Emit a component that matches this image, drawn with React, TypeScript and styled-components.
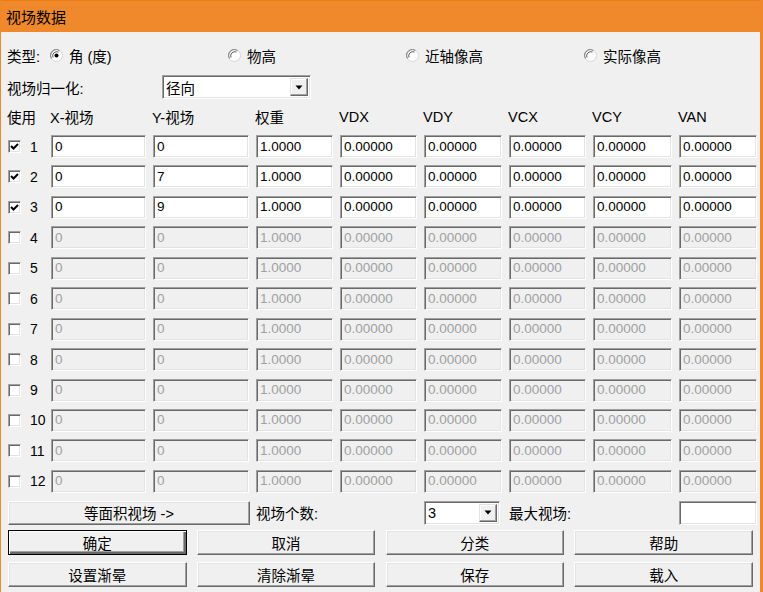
import React from "react";
import styled, { createGlobalStyle } from "styled-components";

const GlobalStyle = createGlobalStyle`
  html, body {
    margin: 0;
    padding: 0;
    background: #f0f0f0;
  }
  body {
    font-family: "Liberation Sans", "Noto Sans CJK SC", sans-serif;
    font-size: 14.5px;
    color: #000;
  }
`;

const Window = styled.div`
  width: 763px;
  height: 592px;
  box-sizing: border-box;
  border-left: 1px solid #f0882b;
  border-right: 3px solid #f0882b;
  background: #f0f0f0;
  overflow: hidden;
`;

const TitleBar = styled.div`
  height: 32px;
  margin-left: -1px;
  margin-right: -3px;
  box-sizing: border-box;
  border-top: 1px solid #ee7a12;
  background: #f0892b;
  display: flex;
  align-items: center;
  padding-left: 6px;
  font-size: 15px;
`;

const Body = styled.div`
  padding: 12px 0 0 6px;
  display: flex;
  flex-direction: column;
`;

const TypeRow = styled.div`
  height: 22px;
  display: flex;
  align-items: center;
`;

const TypeLabel = styled.span`
  width: 43px;
  flex-shrink: 0;
`;

const RadioItem = styled.label`
  width: 178px;
  flex-shrink: 0;
  display: flex;
  align-items: center;
  gap: 6px;
`;

const RadioIcon = styled.svg`
  flex-shrink: 0;
  width: 13px;
  height: 13px;
  display: block;
`;

const NormRow = styled.div`
  margin-top: 9px;
  height: 24px;
  display: flex;
  align-items: center;
`;

const NormLabel = styled.span`
  width: 155px;
  flex-shrink: 0;
`;

const Grid = styled.div<{ $top: number; $h: number }>`
  margin-top: ${(p) => p.$top}px;
  height: ${(p) => p.$h}px;
  display: grid;
  grid-template-columns: 36px 95px 96px 77px 77px 78px 77px 79px 78px;
  column-gap: 7px;
  align-items: center;
  padding-left: 1px;
`;

const HeadCell = styled.span`
  white-space: nowrap;
  margin-left: -1px;
`;

const Rows = styled.div`
  margin-top: 9px;
  display: flex;
  flex-direction: column;
  gap: 7.45px;
`;

const RowHead = styled.div`
  display: flex;
  align-items: center;
  gap: 9px;
`;

const RowNum = styled.span`
  font-size: 14px;
  width: 16px;
  white-space: nowrap;
`;

const Field = styled.input<{ $off?: boolean }>`
  box-sizing: border-box;
  width: 100%;
  height: 23px;
  margin: 0;
  padding: 0 2px 1px 3px;
  border: 1px solid;
  border-color: #a0a0a0 #ffffff #ffffff #a0a0a0;
  box-shadow: inset 1px 1px 0 #696969, inset -1px -1px 0 #e3e3e3;
  background: ${(p) => (p.$off ? "#f0f0f0" : "#ffffff")};
  color: ${(p) => (p.$off ? "#a0a0a0" : "#000")};
  font-family: "Liberation Sans", sans-serif;
  font-size: 13.5px;
  outline: none;
`;

const CheckBox = styled.span`
  box-sizing: border-box;
  flex-shrink: 0;
  width: 13px;
  height: 13px;
  border: 1px solid;
  border-color: #a0a0a0 #ffffff #ffffff #a0a0a0;
  box-shadow: inset 1px 1px 0 #696969, inset -1px -1px 0 #e3e3e3;
  background: #fff;
  display: flex;
  align-items: center;
  justify-content: center;
`;

const Btn = styled.button<{ $default?: boolean }>`
  box-sizing: border-box;
  height: 25px;
  margin: 0;
  padding: 0;
  background: #f0f0f0;
  border: 1px solid;
  border-color: ${(p) =>
    p.$default ? "#000" : "#ffffff #696969 #696969 #ffffff"};
  box-shadow: ${(p) =>
    p.$default
      ? "inset 1px 1px 0 #fff, inset -2px -2px 0 #696969, inset -3px -3px 0 #a0a0a0"
      : "inset -1px -1px 0 #a0a0a0, inset 1px 1px 0 #e3e3e3"};
  font-family: "Liberation Sans", "Noto Sans CJK SC", sans-serif;
  font-size: 14.5px;
  color: #000;
`;

const WideBtn = styled(Btn)`
  grid-column: 1 / span 3;
  height: 24px;
  width: 242px;
`;

const Span2 = styled.span`
  grid-column: span 2;
  align-self: start;
  margin-top: 1px;
`;

const Combo = styled.div<{ $w: number }>`
  box-sizing: border-box;
  width: ${(p) => p.$w}px;
  height: 24px;
  border: 1px solid;
  border-color: #a0a0a0 #ffffff #ffffff #a0a0a0;
  box-shadow: inset 1px 1px 0 #696969, inset -1px -1px 0 #e3e3e3;
  background: #fff;
  display: flex;
  align-items: stretch;
  padding: 2px 2px 2px 3px;
`;

const ComboText = styled.span`
  flex: 1;
  display: flex;
  align-items: center;
`;

const DropBtn = styled.span`
  box-sizing: border-box;
  width: 18px;
  background: #f0f0f0;
  border: 1px solid;
  border-color: #e3e3e3 #696969 #696969 #e3e3e3;
  box-shadow: inset -1px -1px 0 #a0a0a0, inset 1px 1px 0 #fff;
  display: flex;
  align-items: center;
  justify-content: center;
`;

const ButtonGrid = styled.div<{ $top: number }>`
  margin-top: ${(p) => p.$top}px;
  display: grid;
  grid-template-columns: repeat(4, 178.5px);
  column-gap: 10.3px;
  padding-left: 1px;
`;

const Radio = ({ on }: { on?: boolean }) => (
  <RadioIcon viewBox="0 0 13 13">
    <circle cx="6.5" cy="6.5" r="6" fill="#fff" stroke="#d6d6d6" strokeWidth="1" />
    <path d="M1.7 9.5 A5.6 5.6 0 0 1 9.5 1.7" stroke="#8c8c8c" strokeWidth="1.2" fill="none" />
    <path d="M3 8.5 A4.2 4.2 0 0 1 8.5 3" stroke="#5a5a5a" strokeWidth="1" fill="none" />
    {on && <circle cx="6.5" cy="6.5" r="2" fill="#000" />}
  </RadioIcon>
);

const Check = () => (
  <svg width="9" height="9" viewBox="0 0 9 9">
    <path d="M1 4 L3.5 6.5 L8 2" stroke="#000" strokeWidth="2" fill="none" />
  </svg>
);

const Arrow = () => (
  <svg width="8" height="5" viewBox="0 0 8 5">
    <path d="M0.5 0.5 H7.5 L4 4.5 Z" fill="#000" />
  </svg>
);

const yValues = ["0", "7", "9"];

export default function App() {
  const rows = Array.from({ length: 12 }, (_, i) => i + 1);
  return (
    <Window>
      <GlobalStyle />
      <TitleBar>视场数据</TitleBar>
      <Body>
        <TypeRow>
          <TypeLabel>类型:</TypeLabel>
          <RadioItem>
            <Radio on />角 (度)
          </RadioItem>
          <RadioItem>
            <Radio />
            物高
          </RadioItem>
          <RadioItem>
            <Radio />
            近轴像高
          </RadioItem>
          <RadioItem>
            <Radio />
            实际像高
          </RadioItem>
        </TypeRow>
        <NormRow>
          <NormLabel>视场归一化:</NormLabel>
          <Combo $w={149}>
            <ComboText>径向</ComboText>
            <DropBtn>
              <Arrow />
            </DropBtn>
          </Combo>
        </NormRow>
        <Grid $top={7} $h={20}>
          <HeadCell>使用</HeadCell>
          <HeadCell>X-视场</HeadCell>
          <HeadCell>Y-视场</HeadCell>
          <HeadCell>权重</HeadCell>
          <HeadCell>VDX</HeadCell>
          <HeadCell>VDY</HeadCell>
          <HeadCell>VCX</HeadCell>
          <HeadCell>VCY</HeadCell>
          <HeadCell>VAN</HeadCell>
        </Grid>
        <Rows>
          {rows.map((n) => {
            const on = n <= 3;
            return (
              <Grid key={n} $top={0} $h={23}>
                <RowHead>
                  <CheckBox>{on && <Check />}</CheckBox>
                  <RowNum>{n}</RowNum>
                </RowHead>
                <Field readOnly $off={!on} value="0" />
                <Field readOnly $off={!on} value={on ? yValues[n - 1] : "0"} />
                <Field readOnly $off={!on} value="1.0000" />
                {["VDX", "VDY", "VCX", "VCY", "VAN"].map((k) => (
                  <Field key={k} readOnly $off={!on} value="0.00000" />
                ))}
              </Grid>
            );
          })}
        </Rows>
        <Grid $top={8} $h={24}>
          <WideBtn>等面积视场 -&gt;</WideBtn>
          <Span2>视场个数:</Span2>
          <Combo $w={76}>
            <ComboText>3</ComboText>
            <DropBtn>
              <Arrow />
            </DropBtn>
          </Combo>
          <Span2>最大视场:</Span2>
          <Field readOnly value="" style={{ height: 24 }} />
        </Grid>
        <ButtonGrid $top={5}>
          <Btn $default>确定</Btn>
          <Btn>取消</Btn>
          <Btn>分类</Btn>
          <Btn>帮助</Btn>
        </ButtonGrid>
        <ButtonGrid $top={7}>
          <Btn>设置渐晕</Btn>
          <Btn>清除渐晕</Btn>
          <Btn>保存</Btn>
          <Btn>载入</Btn>
        </ButtonGrid>
      </Body>
    </Window>
  );
}
